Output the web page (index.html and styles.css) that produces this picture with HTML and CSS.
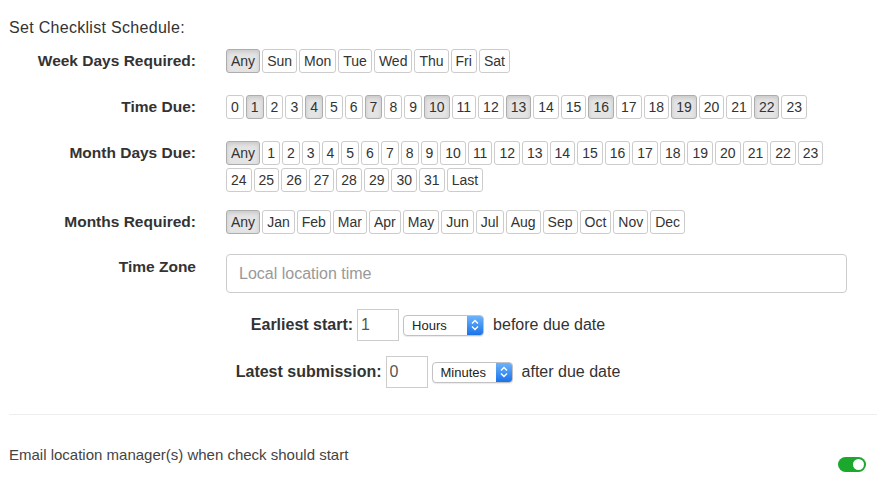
FILE: index.html
```html
<!doctype html>
<html lang="en">
<head>
	<meta charset="UTF-8">
	<title>Checklist Schedule</title>
	<link rel="stylesheet" href="styles.css">
</head>
<body>
	<div class="schedule">
		<div class="schedule-title">Set Checklist Schedule:</div>

		<div class="field">
			<div class="field-label">Week Days Required:</div>
			<div class="field-control">
				<span class="btn active">Any</span>
				<span class="btn">Sun</span>
				<span class="btn">Mon</span>
				<span class="btn">Tue</span>
				<span class="btn">Wed</span>
				<span class="btn">Thu</span>
				<span class="btn">Fri</span>
				<span class="btn">Sat</span>
			</div>
		</div>

		<div class="field">
			<div class="field-label">Time Due:</div>
			<div class="field-control" id="hours"></div>
		</div>

		<div class="field field-month">
			<div class="field-label">Month Days Due:</div>
			<div class="field-control" id="monthdays"></div>
		</div>

		<div class="field field-months">
			<div class="field-label">Months Required:</div>
			<div class="field-control">
				<span class="btn active">Any</span>
				<span class="btn">Jan</span>
				<span class="btn">Feb</span>
				<span class="btn">Mar</span>
				<span class="btn">Apr</span>
				<span class="btn">May</span>
				<span class="btn">Jun</span>
				<span class="btn">Jul</span>
				<span class="btn">Aug</span>
				<span class="btn">Sep</span>
				<span class="btn">Oct</span>
				<span class="btn">Nov</span>
				<span class="btn">Dec</span>
			</div>
		</div>

		<div class="field field-top">
			<div class="field-label">Time Zone</div>
			<div class="field-control">
				<input class="zone-input" type="text" placeholder="Local location time">
			</div>
		</div>

		<div class="offset-row">
			<span class="offset-label">Earliest start:</span>
			<input class="offset-input" type="text" value="1">
			<div class="select">
				<span class="select-text">Hours</span>
				<span class="select-arrow">
					<svg width="8" height="12" viewBox="0 0 8 12"><path d="M1 4.5 L4 1.5 L7 4.5 M1 7.5 L4 10.5 L7 7.5" fill="none" stroke="#fff" stroke-width="1.4"/></svg>
				</span>
			</div>
			<span class="offset-text">before due date</span>
		</div>

		<div class="offset-row">
			<span class="offset-label">Latest submission:</span>
			<input class="offset-input" type="text" value="0">
			<div class="select">
				<span class="select-text">Minutes</span>
				<span class="select-arrow">
					<svg width="8" height="12" viewBox="0 0 8 12"><path d="M1 4.5 L4 1.5 L7 4.5 M1 7.5 L4 10.5 L7 7.5" fill="none" stroke="#fff" stroke-width="1.4"/></svg>
				</span>
			</div>
			<span class="offset-text">after due date</span>
		</div>
	</div>

	<hr class="divider">

	<div class="notify-row">
		<span class="notify-text">Email location manager(s) when check should start</span>
		<span class="toggle on"><span class="toggle-knob"></span></span>
	</div>

	<script type="text/javascript">
	// 小时按钮，每隔三个选中一个
	var hours = document.getElementById("hours");
	for(var i = 0; i < 24; i++) {
		var b = document.createElement("span");
		b.className = (i % 3 == 1) ? "btn active" : "btn";
		b.innerHTML = i;
		hours.appendChild(b);
	}
	// 每月日期
	var days = document.getElementById("monthdays");
	var list = ["Any"];
	for(var d = 1; d <= 31; d++) {
		list.push(d);
	}
	list.push("Last");
	for(var j = 0; j < list.length; j++) {
		var s = document.createElement("span");
		s.className = j == 0 ? "btn active" : "btn";
		s.innerHTML = list[j];
		days.appendChild(s);
	}
	</script>
</body>
</html>
```

FILE: styles.css
```css
body {
	margin: 0;
	font-family: "Liberation Sans", Arial, sans-serif;
	color: #333;
	background: #fff;
}
.schedule {
	padding: 18px 30px 0 9px;
}
.schedule-title {
	font-size: 16px;
	letter-spacing: 0.3px;
	line-height: 20px;
	margin-bottom: 11px;
}
.field {
	display: flex;
	align-items: center;
	margin-bottom: 22px;
}
.field-month {
	align-items: flex-start;
	margin-bottom: 18px;
}
.field-month .field-label {
	padding-top: 2px;
}
.field-months {
	margin-bottom: 20px;
}
.field-top {
	align-items: flex-start;
	margin-bottom: 16px;
}
.field-top .field-label {
	padding-top: 3px;
}
.field-label {
	width: 187px;
	flex-shrink: 0;
	text-align: right;
	font-size: 15.5px;
	font-weight: bold;
	line-height: 20px;
}
.field-control {
	flex: 1;
	margin-left: 30px;
	display: flex;
	flex-wrap: wrap;
	gap: 3px 2px;
}
.btn {
	display: inline-block;
	font-size: 14px;
	line-height: 18px;
	padding: 2px 4px;
	border: 1px solid #ccc;
	border-radius: 3px;
	background-color: #fff;
	cursor: pointer;
	-webkit-user-select: none;
}
.btn.active {
	background-color: #e4e4e4;
	border-color: #adadad;
	box-shadow: inset 0 2px 4px rgba(0,0,0,.12);
}
.zone-input {
	box-sizing: border-box;
	width: 100%;
	height: 39px;
	padding: 0 12px;
	border: 1px solid #ccc;
	border-radius: 4px;
	font-family: inherit;
	font-size: 16px;
	color: #555;
	outline: none;
}
.zone-input::placeholder {
	color: #999;
}
.offset-row {
	display: flex;
	justify-content: center;
	align-items: center;
	margin-bottom: 15px;
}
.offset-row:last-child {
	margin-bottom: 0;
}
.offset-label {
	font-size: 16px;
	font-weight: bold;
}
.offset-input {
	box-sizing: border-box;
	width: 42px;
	height: 32px;
	margin: 0 4px;
	padding: 0 3px;
	border: 1px solid #ccc;
	border-radius: 0;
	font-family: inherit;
	font-size: 16px;
	color: #555;
	outline: none;
}
.select {
	box-sizing: border-box;
	display: flex;
	width: 81px;
	height: 21px;
	margin-right: 9px;
	border: 1px solid #c2c2c2;
	border-radius: 4px;
	background: #fff;
	box-shadow: 0 1px 1px rgba(0,0,0,.08);
	overflow: hidden;
}
.select-text {
	flex: 1;
	font-size: 13px;
	line-height: 19px;
	padding-left: 8px;
	color: #222;
}
.select-arrow {
	width: 16px;
	display: flex;
	align-items: center;
	justify-content: center;
	background: linear-gradient(#6db3fb, #1a73ea);
}
.offset-text {
	font-size: 16px;
}
.divider {
	margin: 26px 0 0 9px;
	border: 0;
	border-top: 1px solid #eee;
}
.notify-row {
	display: flex;
	justify-content: space-between;
	align-items: flex-start;
	padding: 31px 11px 0 9px;
}
.notify-text {
	font-size: 15px;
	line-height: 18px;
	color: #444;
}
.toggle {
	position: relative;
	display: inline-block;
	width: 28px;
	height: 15px;
	margin-top: 11px;
	border-radius: 8px;
	background-color: #1ba82c;
}
.toggle-knob {
	position: absolute;
	right: 2px;
	top: 2px;
	width: 11px;
	height: 11px;
	border-radius: 50%;
	background-color: #fff;
}
```
